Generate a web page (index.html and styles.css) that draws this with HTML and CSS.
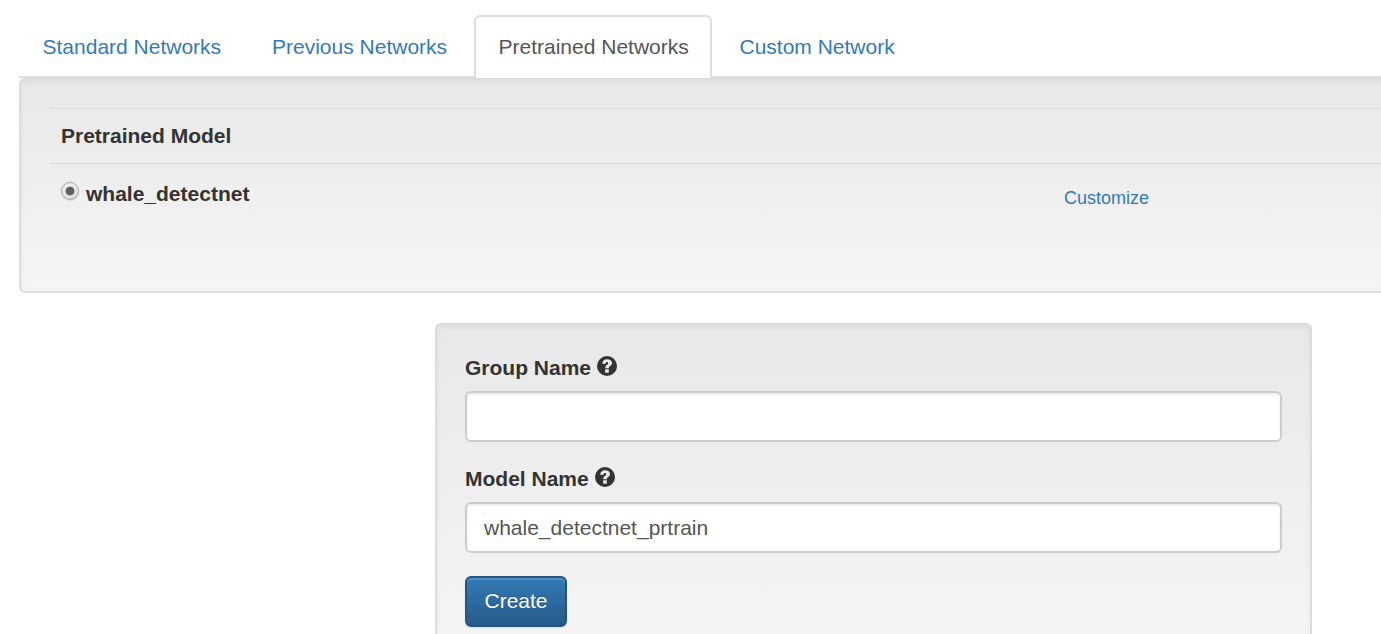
FILE: index.html
```html
<!DOCTYPE html>
<html lang="en">
<head>
<meta charset="utf-8">
<title>New Model</title>
<link rel="stylesheet" href="styles.css">
</head>
<body>
<div class="page">
  <nav class="tabs">
    <a class="tab tab-standard">Standard Networks</a>
    <a class="tab tab-previous">Previous Networks</a>
    <a class="tab tab-active">Pretrained Networks</a>
    <a class="tab tab-custom">Custom Network</a>
  </nav>
  <section class="well models">
    <div class="row head"><span class="head-text">Pretrained Model</span></div>
    <div class="row model">
      <span class="radio"></span>
      <label class="model-name">whale_detectnet</label>
      <a class="customize">Customize</a>
    </div>
  </section>
  <form class="well form">
    <label class="label"><span class="group-text">Group Name</span>
      <svg class="help" viewBox="0 0 20 20"><circle cx="10" cy="10" r="10"/><path d="M5.2 7.7C5.3 4.8 7.2 3.2 10.1 3.2c2.9 0 4.9 1.5 4.9 3.8 0 2.9-3.2 3-3.2 5.2H8.2c0-3.3 3-3.4 3-5 0-.7-.5-1.1-1.2-1.1-.9 0-1.3.5-1.4 1.6zM8.2 13.3h3.6v3.4H8.2z"/></svg>
    </label>
    <div class="input"></div>
    <label class="label second"><span class="model-text">Model Name</span>
      <svg class="help" viewBox="0 0 20 20"><circle cx="10" cy="10" r="10"/><path d="M5.2 7.7C5.3 4.8 7.2 3.2 10.1 3.2c2.9 0 4.9 1.5 4.9 3.8 0 2.9-3.2 3-3.2 5.2H8.2c0-3.3 3-3.4 3-5 0-.7-.5-1.1-1.2-1.1-.9 0-1.3.5-1.4 1.6zM8.2 13.3h3.6v3.4H8.2z"/></svg>
    </label>
    <div class="input"><span class="value">whale_detectnet_prtrain</span></div>
    <button class="create" type="button">Create</button>
  </form>
</div>
</body>
</html>
```
FILE: styles.css
```css
* { box-sizing: border-box; }
body {
  margin: 0;
  background: #fff;
  color: #333;
  font: 21px/30px "Liberation Sans", Arial, sans-serif;
}
.page { height: 634px; overflow: hidden; padding: 15px 0 0 19px; }
.tabs {
  display: flex;
  gap: 3px;
  height: 63px;
  border-bottom: 2px solid #ddd;
}
.tab {
  flex: none;
  height: 63px;
  padding: 15px 0 0 22px;
  border: 2px solid transparent;
  border-bottom: 0;
  border-radius: 6px 6px 0 0;
  color: #337ab7;
  white-space: nowrap;
}
.tab-standard { width: 226px; padding-left: 21.5px; }
.tab-previous { width: 223px; }
.tab-active { width: 238px; padding-left: 22.5px; color: #555; background: #fff; border-color: #ddd; }
.tab-custom { width: 203px; padding-left: 22.5px; }
.well {
  border: 2px solid #dcdcdc;
  border-radius: 6px;
  background: linear-gradient(#e8e8e8, #f5f5f5);
  box-shadow: inset 0 2px 5px rgba(0, 0, 0, .05);
}
.models {
  width: 1392px;
  height: 215px;
  padding: 28px 28px 0;
}
.row { border-top: 1px solid #ddd; padding-left: 12px; }
.head { height: 55px; padding-top: 12px; font-weight: bold; }
.model { display: flex; height: 70px; padding-top: 18px; }
.radio {
  width: 18px;
  height: 18px;
  border: 1px solid #a5a5a5;
  border-radius: 50%;
  background: radial-gradient(circle, #5f5f5f 0 4px, transparent 4.8px), linear-gradient(#eee, #ddd);
  box-shadow: 0 1px 1px rgba(0, 0, 0, .1);
}
.model-name { width: 978px; margin: -3px 0 0 7px; font-weight: bold; }
.customize { margin-top: 1px; color: #337ab7; font-size: 18px; }
.form { width: 877px; height: 334px; margin: 30px 0 0 416px; padding: 28px; }
.label { display: flex; align-items: flex-start; gap: 6px; height: 38px; font-weight: bold; }
.label.second { margin-top: 22px; }
.help { width: 20px; height: 20px; margin-top: 3px; }
.help circle { fill: #333; }
.help path { fill: #e9e9e9; }
.input {
  height: 51px;
  padding: 9px 17px;
  border: 2px solid #ccc;
  border-radius: 6px;
  background: #fff;
  color: #555;
  box-shadow: inset 0 2px 2px rgba(0, 0, 0, .075);
}
.create {
  display: block;
  width: 102px;
  height: 51px;
  margin-top: 23px;
  padding: 0 0 2px;
  border: 2px solid #245580;
  border-radius: 6px;
  background: linear-gradient(#337ab7, #265a88);
  color: #fff;
  font: inherit;
  text-shadow: 0 -1px 0 rgba(0, 0, 0, .2);
  box-shadow: inset 0 2px 0 rgba(255, 255, 255, .15), 0 1px 2px rgba(0, 0, 0, .075);
}
```
